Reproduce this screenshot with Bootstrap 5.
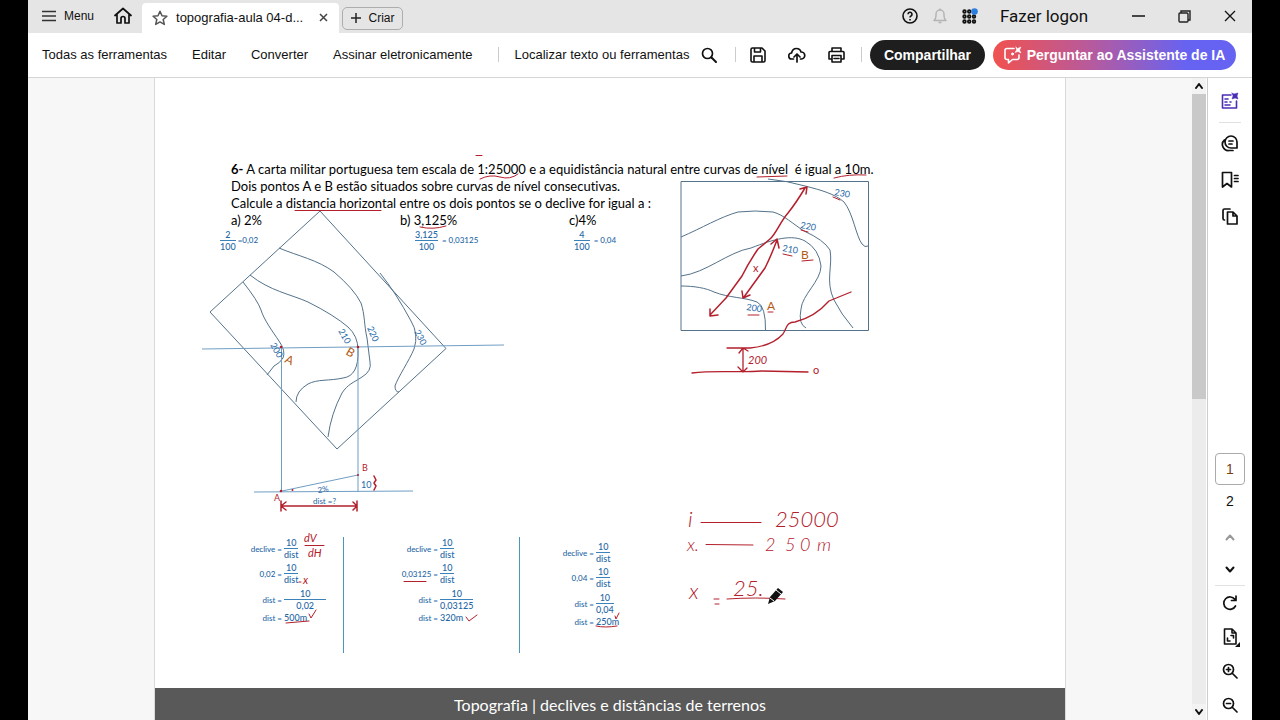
<!DOCTYPE html>
<html lang="pt-BR">
<head>
<meta charset="utf-8">
<meta name="viewport" content="width=device-width, initial-scale=1">
<title>topografia-aula 04</title>
<link href="https://cdn.jsdelivr.net/npm/bootstrap@5.3.0/dist/css/bootstrap.min.css" rel="stylesheet">
<style>
  body { background: #000; font-family: "Liberation Sans", Arial, sans-serif; font-size: 14px; line-height: 20px; color: #111; }
  button { background: none; border: 0; padding: 0; color: inherit; }
  svg { display: block; flex-shrink: 0; }
  .ico { fill: none; stroke: currentColor; stroke-width: 2; stroke-linejoin: round; stroke-linecap: round; }
  .app { margin: 0 28px; background: #fff; }
  .titlebar { height: 33px; background: #e5e5e5; padding: 0 16px 0 14px; }
  .menu-btn { font-size: 12px; gap: 8px; }
  .doc-tab { height: 30px; width: 197px; background: #fff; border-radius: 4px 4px 0 0; padding: 0 11px 0 10px; margin-left: 10px; font-size: 13px; }
  .home-btn { margin-left: 20px; }
  .new-tab { height: 23px; width: 61px; border: 1px solid #adadad; border-radius: 5px; font-size: 12px; margin: 3px 0 3px 3px; }
  .status-icons { gap: 15px; margin-right: 22px; }
  .window-controls { gap: 33px; margin-left: 43px; }
  .logon { font-size: 17px; font-family: Roboto, sans-serif; width: 88px; }
  .toolbar { height: 45px; border-bottom: 1px solid #d5d5d5; padding: 0 16px 0 14px; font-size: 13px; }
  .toolbar a { color: #111; text-decoration: none; white-space: nowrap; }
  .toolbar button { white-space: nowrap; }
  .menu-links { gap: 25px; }
  .tool-icons { gap: 22px; margin: 0 16px 0 14px; }
  .sep { width: 1px; height: 15px; background: #ccc; }
  .pill { height: 30px; border-radius: 15px; color: #fff; font-weight: 700; font-size: 14px; }
  .pill-dark { background: #1e1e1e; width: 115px; }
  .pill-ai { background: linear-gradient(90deg, #f0524f, #b75a9d 40%, #6663f2 80%); width: 243px; gap: 5px; }
  .viewer { background: #f7f7f7; }
  .slide { width: 100%; max-width: 912px; background: #fff; border: solid #d9d9d9; border-width: 0 1px; font-family: Lato, sans-serif; font-variant-ligatures: none; color: #000; }
  .question { padding: 83px 0 0 76px; font-size: 13px; line-height: 17px; }
  .question p { margin: 0; white-space: nowrap; }
  .options { grid-template-columns: 169px 169px 169px; }
  .tiny { font-size: 8px; line-height: 10px; color: #1f68a6; font-weight: 500; }
  .ratio-value { display: inline-flex; flex-direction: column; text-align: center; font-size: 9px; line-height: 11px; }
  .ratio-value span:first-child { border-bottom: 1px solid #3b82ba; }
  .shift-a { margin-left: -11px; }
  .shift-b { margin-left: 15px; }
  .shift-c { margin-left: 5px; }
  .solutions { margin-top: 285px; grid-template-columns: 189px 176px 1fr; }
  .solution { display: grid; height: 116px; align-content: start; align-items: center; grid-template-rows: 24px 26px 26px 10px; column-gap: 2px; line-height: 12px; }
  .solution > span:nth-child(odd) { text-align: right; }
  .solution > span:nth-child(even) { justify-self: start; }
  .solution .result { font-size: 9px; }
  .solution.ruled { border-right: 1px solid #4a97bd; }
  .s1 { grid-template-columns: 127px 1fr; }
  .s2 { grid-template-columns: 94px 1fr; }
  .s3 { grid-template-columns: 74px 1fr; padding-top: 4px; }
  .slide-foot { margin-top: 35px; height: 36px; background: #595959; color: #fff; font-size: 16px; line-height: 34px; }
  .sketch { fill: none; stroke-width: 1; }
  .sketch text { stroke: none; }
  .contour { stroke: #54728a; }
  .guide { stroke: #6f9ec4; }
  .ink { stroke: #b3202c; stroke-linecap: round; stroke-linejoin: round; }
  .ink text { fill: #b3202c; font-weight: 300; font-size: 22px; }
  .ink .second { font-size: 18px; }
  .ink .note { font-size: 11px; font-weight: 400; }
  .ink .note-s { font-size: 9px; font-weight: 400; }
  .lbl { fill: #1f68a6; font-size: 9px; }
  .pt { fill: #b35b14; font-size: 12px; }
  .scroller { width: 14px; background: #ececec; margin-right: 1px; }
  .scroller button { height: 16px; background: #f3f3f3; }
  .thumb { height: 305px; background: #c9c9c9; }
  .rail { width: 45px; border-left: 1px solid #ccc; }
  .rail button { width: 30px; height: 30px; }
  .rail hr { margin: 6px 0; width: 22px; color: #888; }
  .rail .rail-line { width: 30px; margin: 16px 0 2px; }
  .rail-tools { gap: 6px; }
  .rail .pg { height: 32px; }
  .rail .current { border: 1px solid #aaa; border-radius: 4px; color: #7a3f13; }
</style>
</head>
<body>
<div class="app vh-100 d-flex flex-column overflow-hidden">
  <header class="titlebar d-flex align-items-end">
    <div class="d-flex align-items-center h-100">
      <button class="menu-btn d-flex align-items-center" type="button">
        <svg width="14" height="14" viewBox="0 0 14 14" stroke="#333" stroke-width="1.5"><path d="M0 2.5h14M0 7h14M0 11.500h14"/></svg>Menu
      </button>
      <button type="button" aria-label="Início" class="home-btn">
        <svg class="ico" width="18" height="18" viewBox="0 0 18 18"><path d="M1 8.500 9 1.500l8 7M3 7.500V16h4v-4.500a2 2 0 0 1 4 0V16h4V7.500" stroke-width="1.700"/></svg>
      </button>
    </div>
    <div class="doc-tab d-flex align-items-center">
      <svg class="me-2" width="16" height="16" viewBox="0 0 16 16" fill="none" stroke="#555" stroke-width="1.500" stroke-linejoin="round"><path d="m8 1.200 2 4.500 4.900.500-3.700 3.300 1.100 4.900L8 11.900l-4.300 2.500 1.100-4.900L1.100 6.200 6 5.700z"/></svg>
      <span class="text-nowrap flex-grow-1">topografia-aula 04-d...</span>
      <button type="button" aria-label="Fechar aba"><svg width="9" height="9" viewBox="0 0 9 9" stroke="#444" stroke-width="1.500"><path d="m1 1 7 7M8 1 1 8"/></svg></button>
    </div>
    <button class="new-tab d-flex align-items-center justify-content-center gap-2" type="button">
      <svg width="10" height="10" viewBox="0 0 10 10" stroke="#222" stroke-width="1.500"><path d="M5 0v10M0 5h10"/></svg>Criar
    </button>
    <div class="ms-auto h-100 d-flex align-items-center">
      <div class="status-icons d-flex align-items-center">
        <button type="button" aria-label="Ajuda"><svg width="16" height="16" viewBox="0 0 16 16" fill="none" stroke="#111" stroke-width="1.600"><circle cx="8" cy="8" r="7"/><path d="M6 6.300a2 2 0 1 1 3 1.700q-1 .5-1 1.500M8 11v1.500"/></svg></button>
        <button type="button" aria-label="Notificações"><svg width="14" height="16" viewBox="0 0 14 16" fill="none" stroke="#b3b3b3" stroke-width="1.400" stroke-linejoin="round"><path d="M1 12.500q2-2 2-4.500V6a4 4 0 0 1 8 0v2q0 2.500 2 4.500zM5.500 14.500h3M7 2V.5"/></svg></button>
        <button type="button" aria-label="Aplicativos"><svg width="16" height="16" viewBox="0 0 16 16"><g fill="none" stroke="#111" stroke-width="1.800"><circle cx="2.500" cy="3.500" r="1.300"/><circle cx="7.200" cy="3.500" r="1.300"/><circle cx="2.500" cy="8.500" r="1.300"/><circle cx="7.200" cy="8.500" r="1.300"/><circle cx="12" cy="8.500" r="1.300"/><circle cx="2.500" cy="13.500" r="1.300"/><circle cx="7.200" cy="13.500" r="1.300"/><circle cx="12" cy="13.500" r="1.300"/></g><circle cx="12.500" cy="3.500" r="3.300" fill="#2b7de0"/></svg></button>
      </div>
      <button type="button" class="logon text-nowrap text-start">Fazer logon</button>
      <div class="window-controls d-flex align-items-center">
        <button type="button" aria-label="Minimizar"><svg width="14" height="14" viewBox="0 0 14 14" stroke="#111" stroke-width="1.500"><path d="M1 7h13"/></svg></button>
        <button type="button" aria-label="Restaurar"><svg width="13" height="13" viewBox="0 0 13 13" fill="none" stroke="#222" stroke-width="1.400"><rect x="1" y="3" width="9" height="9" rx="1"/><path d="M3 3V1h9v9h-2"/></svg></button>
        <button type="button" aria-label="Fechar"><svg width="12" height="12" viewBox="0 0 12 12" stroke="#111" stroke-width="1.300"><path d="m1 1 10 10M11 1 1 11"/></svg></button>
      </div>
    </div>
  </header>

  <nav class="toolbar d-flex align-items-center flex-shrink-0">
    <div class="menu-links d-flex align-items-center">
      <a href="#">Todas as ferramentas</a><a href="#">Editar</a><a href="#">Converter</a><a href="#">Assinar eletronicamente</a>
      <span class="sep"></span>
    </div>
    <button type="button" class="d-flex align-items-center gap-2 ms-3">Localizar texto ou ferramentas
      <svg class="ico ms-1" width="16" height="16" viewBox="0 0 16 16"><circle cx="6.500" cy="6.500" r="5" stroke-width="1.700"/><path d="m10.500 10.500 4.500 4.500"/></svg></button>
    <div class="d-flex align-items-center ms-auto">
      <span class="sep"></span>
      <div class="tool-icons d-flex align-items-center">
        <button type="button" aria-label="Salvar"><svg class="ico" width="16" height="16" viewBox="0 0 16 16"><path d="M1 2.500Q1 1 2.500 1H12l3 3v9.500q0 1.500-1.500 1.500h-11Q1 15 1 13.500zM4.500 1v4h6V1M4 15V9h8v6" stroke-width="1.600"/></svg></button>
        <button type="button" aria-label="Enviar"><svg class="ico" width="18" height="16" viewBox="0 0 18 16"><path d="M5.500 12H4a3 3 0 0 1-.5-6Q4.500 1.500 8.500 1.500q3.500 0 4.500 3.500a3.500 3.500 0 0 1 .5 7h-1M9 15V7M6 10l3-3 3 3" stroke-width="1.700"/></svg></button>
        <button type="button" aria-label="Imprimir"><svg class="ico" width="17" height="16" viewBox="0 0 17 16"><path d="M4 4V1h9v3M4 12H1V5.500Q1 4.500 2 4.500h13q1 0 1 1V12h-3M4 8.500h9V15H4zM6 11.500h5" stroke-width="1.600"/></svg></button>
      </div>
      <span class="sep me-2"></span>
      <button type="button" class="pill pill-dark me-2">Compartilhar</button>
      <button type="button" class="pill pill-ai d-flex align-items-center justify-content-center">
        <svg class="ico" width="18" height="18" viewBox="0 0 18 18"><path d="M10 2.500H3Q1 2.500 1 4.500v7q0 2 2 2h1.500V17l4-3.500H13q2 0 2-2V9" stroke-width="1.600"/><path d="m12 1 1.500 1.500L17 1l-1.500 3L17 7l-3-1.500L11 6.500l1.500-2.500z" fill="currentColor" stroke-width=".5"/><circle cx="8.500" cy="8" r="1" fill="currentColor" stroke-width="1"/></svg>Perguntar ao Assistente de IA</button>
    </div>
  </nav>

  <div class="d-flex flex-grow-1 overflow-hidden">
    <main class="viewer flex-grow-1 overflow-hidden d-flex justify-content-center align-items-start">
      <article class="slide position-relative">
        <section class="question">
          <p><b>6-</b> A carta militar portuguesa tem escala de 1:25000 e a equidistância natural entre curvas de nível &nbsp;é igual a 10m.</p>
          <p>Dois pontos A e B estão situados sobre curvas de nível consecutivas.</p>
          <p>Calcule a distancia horizontal entre os dois pontos se o declive for igual a :</p>
          <div class="options d-grid">
            <span>a) 2%</span><span>b) 3,125%</span><span>c)4%</span>
            <div class="tiny shift-a d-flex align-items-center"><span class="ratio-value"><span>2</span><span>100</span></span>&nbsp;=0,02</div>
            <div class="tiny shift-b d-flex align-items-center gap-1"><span class="ratio-value"><span>3,125</span><span>100</span></span>= 0,03125</div>
            <div class="tiny shift-c d-flex align-items-center gap-1"><span class="ratio-value"><span>4</span><span>100</span></span>= 0,04</div>
          </div>
        </section>

        <section class="solutions d-grid tiny">
          <div class="solution ruled s1">
            <span>declive =</span><span class="ratio-value"><span>10</span><span>dist</span></span>
            <span>0,02 =</span><span class="ratio-value"><span>10</span><span>dist</span></span>
            <span>dist =</span><span class="ratio-value"><span class="px-3">10</span><span>0,02</span></span>
            <span>dist =</span><span class="result">500m</span>
          </div>
          <div class="solution ruled s2">
            <span>declive =</span><span class="ratio-value"><span>10</span><span>dist</span></span>
            <span>0,03125 =</span><span class="ratio-value"><span>10</span><span>dist</span></span>
            <span>dist =</span><span class="ratio-value"><span>10</span><span>0,03125</span></span>
            <span>dist =</span><span class="result">320m</span>
          </div>
          <div class="solution s3">
            <span>declive =</span><span class="ratio-value"><span>10</span><span>dist</span></span>
            <span>0,04 =</span><span class="ratio-value"><span>10</span><span>dist</span></span>
            <span>dist =</span><span class="ratio-value"><span>10</span><span>0,04</span></span>
            <span>dist =</span><span class="result">250m</span>
          </div>
        </section>

        <footer class="slide-foot text-center">Topografia | declives e distâncias de terrenos</footer>

        <svg class="sketch position-absolute top-0 start-0 w-100" viewBox="155 78 910 642" role="img" aria-label="Curvas de nível com anotações">
          <g class="contour">
            <path d="M320 211 446 348.500 337 449 210 312z"/>
            <path d="M279 248C298 256 318 260 334 272Q354 289 361 303C365 315 364 325 367 338L370 362Q372 371 362 377C353 383 348 384 342 393Q331 414 328 437"/>
            <path d="M250 275C270 291 290 294 308 302Q334 315 348 327Q358 336 358 350Q359 376 343 378C330 381 317 379 308 384Q296 391 296 402"/>
            <path d="M243 282Q258 301 261 310C264 320 273 332 279 341Q286 351 283 358Q280 363 274 366L267 375"/>
            <path d="M380 273Q396 293 411 321Q419 334 414 349C409 361 398 377 395 386Q395 392 399 392"/>
            <path d="M681 181.500H868.500V330.500H681z"/>
            <path d="M768 179Q788 181 805 186C821 190 835 194 844 202C853 213 856 236 862 244Q865 248 868 246"/>
            <path d="M681 237C702 228 720 217 738 212Q755 210 773 212C784 215 793 224 804 231Q824 240 830 250C833 266 825 281 834 300Q841 314 853 328"/>
            <path d="M681 276C706 273 728 252 751 248C774 239 792 234 805 241Q819 249 821 266C821 281 802 295 801 309Q798 324 806 328"/>
            <path d="M681 286C694 286 706 288 714 292C729 298 744 297 757 302Q766 306 765.500 331"/>
          </g>
          <g class="guide">
            <path d="M202 349 504 345M281.500 347V492M358 347V492M254 492 413 491M282 491 358 475"/>
          </g>
          <g class="lbl">
            <text transform="translate(270 345) rotate(60)">200</text>
            <text transform="translate(338 331) rotate(60)">210</text>
            <text transform="translate(367 328) rotate(66)">220</text>
            <text transform="translate(414 332) rotate(62)">230</text>
            <text transform="translate(834 195) rotate(10)">230</text>
            <text transform="translate(800 228) rotate(10)">220</text>
            <text transform="translate(782 251) rotate(10)">210</text>
            <text transform="translate(746 310) rotate(8)">200</text>
            <text transform="translate(318 493) rotate(-8)" font-size="8">2%</text>
            <text x="361" y="488">10</text>
            <text x="313" y="504" font-size="8">dist =?</text>
          </g>
          <g class="pt">
            <text transform="translate(284 362) rotate(25)">A</text>
            <text transform="translate(345 354) rotate(30)">B</text>
            <text x="767" y="310">A</text>
            <text x="801" y="259">B</text>
          </g>
          <g class="ink">
            <path d="M476 155.500h6M480 179q10-5 20-2t18-3M295 210.500H381M420 227q13 3 26-1M757 177l30-1M834 178q15-4 32-3M833 197l7 3M801 230l7 2M783 254l9 2M802 261l11-1M748 315h11M768 312h5"/>
            <path d="M805 188Q796 203 788 213C780 222 776 234 770 239L758 249Q749 262 742 276L726 298 710 315M800 189l7-2-1 7M710 309v7l8-1M777 240Q771 256 765 268L744 297M771 244l6-5 2 9M742 291l1 7 7-3" stroke-width="1.500"/>
            <path d="M727 348H750Q772 346 783 334C787 328 786 322 795 322Q815 317 829 301L851 292M692 373C717 370 738 373 762 371L808 372M743 348V371M739 353l4-5 5 3M738 367l5 5 4-4" stroke-width="1.300"/>
            <path d="M281 506H357M281 501v10M286 502l-5 4 5 4M357 501v10M353 502l4 4-4 4M374 476l2 4-2 3 2 3-2 4" stroke-width="1.500"/>
            <path d="M305 545.500h19M286 623l23-2M309 614l2 4 5-8M299 582h2M404 581.500h22M466 617l3 4 8-6M596 626q9 2 21 0M615 616l1 3 3-6"/>
            <path d="M701 522.500H761M706 544.500 753 545M727 599q28-2 58 0M714 599h5M715 604h4"/>
            <g fill="#b3202c" stroke="none"><circle cx="281" cy="347" r="1.300"/><circle cx="358" cy="347" r="1.300"/><circle cx="281" cy="491" r="1.300"/><circle cx="292.500" cy="490" r="1"/><circle cx="358" cy="475" r="1"/></g>
            <text class="note" x="753" y="272">x</text>
            <text class="note" x="748" y="364" font-style="italic">200</text>
            <text class="note" x="813" y="374">o</text>
            <text class="note-s" x="362" y="471">B</text>
            <text class="note-s" x="274" y="501">A</text>
            <text class="note" x="304" y="542" font-style="italic">dV</text>
            <text class="note" x="308" y="557" font-style="italic">dH</text>
            <text class="note" x="303" y="584" font-style="italic">x</text>
            <text x="688" y="527" font-style="italic">i</text>
            <text x="775" y="527" font-style="italic">25000</text>
            <text class="second" x="687" y="551" font-style="italic">x.</text>
            <text class="second" font-style="italic"><tspan x="765" y="551">2</tspan><tspan x="785">5</tspan><tspan x="800">0</tspan><tspan x="817">m</tspan></text>
            <text x="689" y="599" font-style="italic">x</text>
            <text x="733" y="596" font-style="italic">25.</text>
          </g>
          <path d="m768 604 2-7 8-9 5 4-8 9z" fill="#111"/><path d="m776 590 5 4M770 598l4 3" stroke="#fff"/>
        </svg>
      </article>
    </main>

    <div class="scroller d-flex flex-column flex-shrink-0">
      <button type="button" aria-label="Rolar para cima" class="d-flex align-items-center justify-content-center"><svg class="ico" width="8" height="6" viewBox="0 0 8 6"><path d="m1 5 3-4 3 4"/></svg></button>
      <div class="thumb"></div>
      <button type="button" aria-label="Rolar para baixo" class="mt-auto d-flex align-items-center justify-content-center"><svg class="ico" width="8" height="6" viewBox="0 0 8 6"><path d="m1 1 3 4 3-4"/></svg></button>
    </div>

    <aside class="rail d-flex flex-column align-items-center flex-shrink-0">
      <div class="d-flex flex-column align-items-center pt-2">
        <button type="button" aria-label="Resumo" class="d-flex align-items-center justify-content-center"><svg class="ico" width="18" height="18" viewBox="0 0 18 18" style="color:#4b2db5"><path d="M10 3H1.500v13h14V9M4 7h3M4 10h2M4 13h5M9 10h1" stroke-width="1.600"/><path d="m11 1 2 1 4-1-1 3 1 3-3-1-3 1 1-3z" fill="currentColor" stroke-width=".5"/></svg></button>
        <hr>
        <div class="rail-tools d-flex flex-column">
        <button type="button" aria-label="Comentários" class="d-flex align-items-center justify-content-center"><svg class="ico" width="18" height="17" viewBox="0 0 18 17"><path d="M10 13a6 6 0 1 1 6-6v6zM3.500 5A6 6 0 0 0 8 15.500h4M8 6h4M8 9h3" stroke-width="1.700"/></svg></button>
        <button type="button" aria-label="Marcadores" class="d-flex align-items-center justify-content-center"><svg class="ico" width="18" height="18" viewBox="0 0 18 18"><path d="M1.500 1.500h9V16L6 12.500 1.500 16zM13.500 4.500H17M13.500 7.500H17M13.500 10.500H17" stroke-width="1.700"/></svg></button>
        <button type="button" aria-label="Páginas" class="d-flex align-items-center justify-content-center"><svg class="ico" width="18" height="18" viewBox="0 0 18 18"><path d="M6.500 5H12l4 4v8H6.500zM12 5v4h4M3.500 13Q2 13 2 11.500v-8Q2 2 3.500 2H9" stroke-width="1.700"/></svg></button>
        </div>
      </div>
      <div class="mt-auto d-flex flex-column align-items-center">
        <button type="button" class="pg current">1</button>
        <button type="button" class="pg">2</button>
        <button type="button" aria-label="Página anterior" class="pg d-flex align-items-center justify-content-center mt-1"><svg class="ico" width="10" height="7" viewBox="0 0 10 7" style="color:#999"><path d="m1.500 5.500 3.500-4 3.500 4"/></svg></button>
        <button type="button" aria-label="Próxima página" class="pg d-flex align-items-center justify-content-center"><svg class="ico" width="10" height="7" viewBox="0 0 10 7"><path d="m1.500 1.500 3.500 4 3.500-4"/></svg></button>
        <hr class="rail-line mt-0">
        <div class="d-flex flex-column gap-1">
          <button type="button" aria-label="Girar" class="d-flex align-items-center justify-content-center"><svg class="ico" width="16" height="16" viewBox="0 0 16 16"><path d="M13.500 11A6.200 6.200 0 1 1 13 4.500M14 1v4.500H9.500" stroke-width="1.700"/></svg></button>
          <button type="button" aria-label="Ajustar página" class="d-flex align-items-center justify-content-center"><svg class="ico" width="20" height="20" viewBox="0 0 20 20"><path d="M4.500 2H12l4 4v11H4.500zM12 2v4h4M7.500 11v3H10M11 8.500h2.500V11" stroke-width="1.600"/><path d="M20 15v5h-5z" fill="currentColor" stroke="none"/></svg></button>
          <button type="button" aria-label="Ampliar" class="d-flex align-items-center justify-content-center"><svg class="ico" width="16" height="16" viewBox="0 0 16 16"><circle cx="6.500" cy="6.500" r="5" stroke-width="1.700"/><path d="m10.500 10.500 4.500 4.500M4.500 6.500h4M6.500 4.500v4" stroke-width="1.700"/></svg></button>
          <button type="button" aria-label="Reduzir" class="d-flex align-items-center justify-content-center"><svg class="ico" width="16" height="16" viewBox="0 0 16 16"><circle cx="6.500" cy="6.500" r="5" stroke-width="1.700"/><path d="m10.500 10.500 4.500 4.500M4.500 6.500h4" stroke-width="1.700"/></svg></button>
        </div>
      </div>
    </aside>
  </div>
</div>
<script src="https://cdn.jsdelivr.net/npm/bootstrap@5.3.0/dist/js/bootstrap.bundle.min.js"></script>
</body>
</html>
